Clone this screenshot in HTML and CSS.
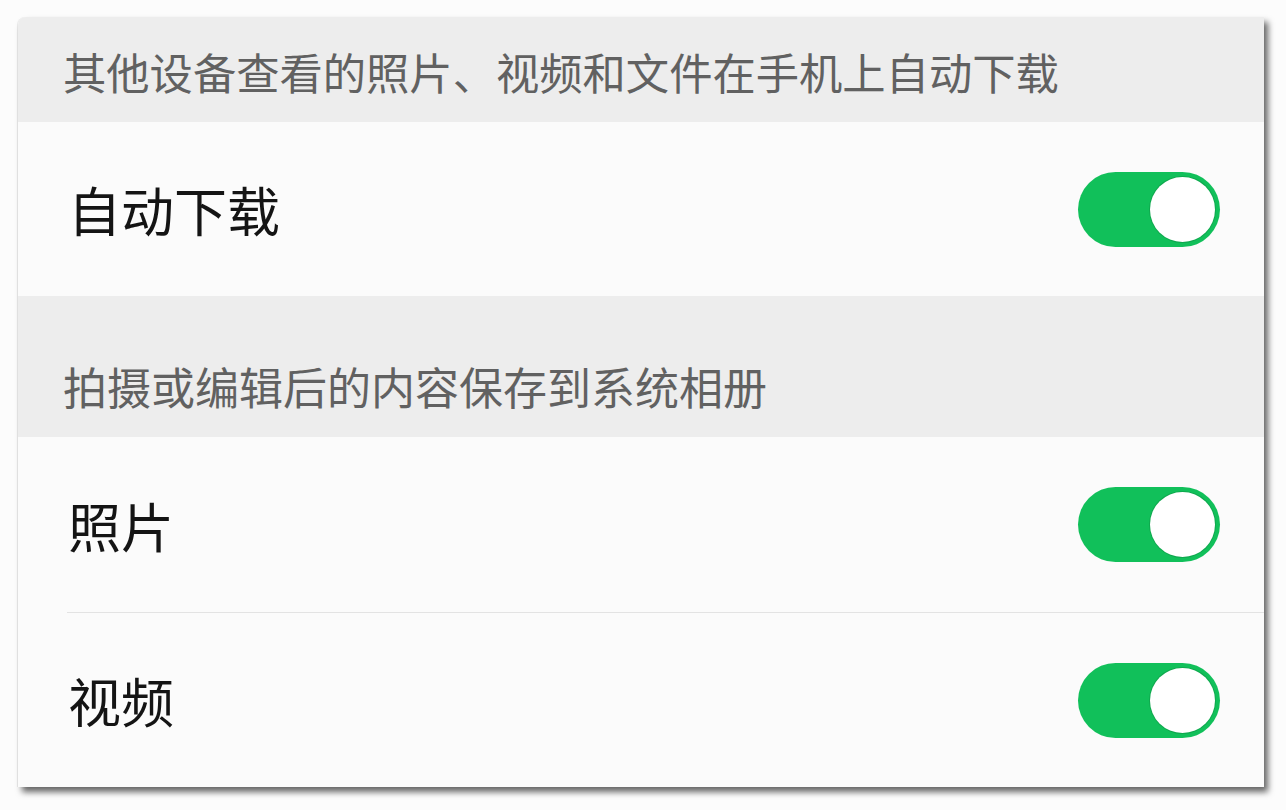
FILE: index.html
```html
<!DOCTYPE html>
<html lang="zh-CN">
<head>
<meta charset="utf-8">
<title>设置</title>
<link rel="stylesheet" href="styles.css">
</head>
<body>
<div class="card">
  <div class="section-header first">其他设备查看的照片、视频和文件在手机上自动下载</div>
  <div class="row tall">
    <span class="label">自动下载</span>
    <span class="switch on"><span class="knob"></span></span>
  </div>
  <div class="section-header second">拍摄或编辑后的内容保存到系统相册</div>
  <div class="row">
    <span class="label">照片</span>
    <span class="switch on"><span class="knob"></span></span>
  </div>
  <div class="divider"></div>
  <div class="row last">
    <span class="label">视频</span>
    <span class="switch on"><span class="knob"></span></span>
  </div>
</div>
</body>
</html>
```
FILE: styles.css
```css
html, body {
  margin: 0;
  padding: 0;
  background: #fcfcfc;
  font-family: "Noto Sans CJK SC", "Noto Sans", sans-serif;
}
body {
  height: 810px;
  overflow: hidden;
}
.card {
  margin: 17px 0 0 18px;
  width: 1246px;
  height: 770px;
  background: #fbfbfb;
  border-radius: 8px 0 0 0;
  box-shadow: 4px 5px 6px rgba(0, 0, 0, 0.6), -1px 0 0 #ececec;
  display: flex;
  flex-direction: column;
}
.section-header {
  background: #ededed;
  color: #616161;
  font-size: 43.3px;
  line-height: 44px;
  padding: 0 0 29px 45px;
  display: flex;
  align-items: flex-end;
  box-sizing: border-box;
}
.section-header.first {
  height: 105px;
  border-radius: 8px 0 0 0;
}
.section-header.second {
  height: 141px;
  font-size: 44px;
}
.row {
  height: 175px;
  display: flex;
  align-items: center;
  justify-content: space-between;
  padding: 0 44px 0 50px;
  box-sizing: border-box;
  background: #fbfbfb;
}
.row.tall {
  height: 174px;
}
.row.last {
  height: 174px;
}
.label {
  font-size: 53px;
  line-height: 54px;
  color: #141414;
}
.divider {
  height: 1px;
  background: #e3e3e3;
  margin-left: 49px;
}
.switch {
  position: relative;
  width: 142px;
  height: 75px;
  border-radius: 38px;
  background: #11c05a;
  flex: none;
}
.switch .knob {
  position: absolute;
  right: 5px;
  top: 5px;
  width: 65px;
  height: 65px;
  border-radius: 50%;
  background: #ffffff;
  box-shadow: 0 0 0 1px #0fa84e;
}
```
